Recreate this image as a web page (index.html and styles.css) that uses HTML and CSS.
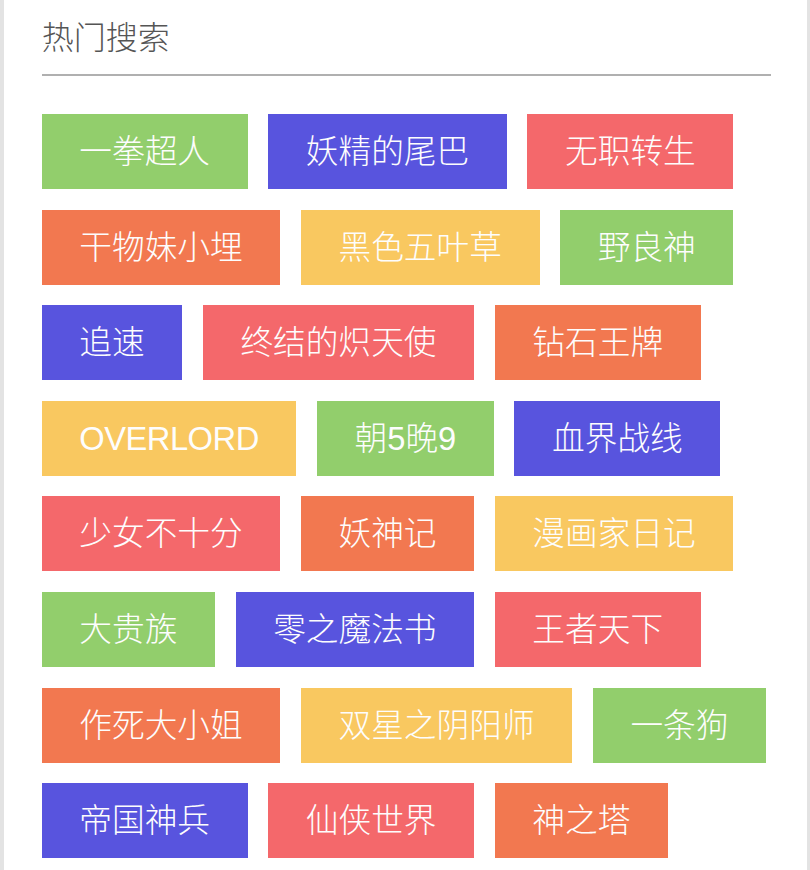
FILE: index.html
```html
<!DOCTYPE html>
<html lang="zh-CN">
<head>
<meta charset="utf-8">
<title>热门搜索</title>
<link rel="stylesheet" href="styles.css">
</head>
<body>
<div class="page">
  <h1 class="title">热门搜索</h1>
  <ul class="tags">
    <li class="tag green">一拳超人</li>
    <li class="tag purple">妖精的尾巴</li>
    <li class="tag red">无职转生</li>
    <li class="tag orange">干物妹小埋</li>
    <li class="tag yellow">黑色五叶草</li>
    <li class="tag green">野良神</li>
    <li class="tag purple">追速</li>
    <li class="tag red">终结的炽天使</li>
    <li class="tag orange">钻石王牌</li>
    <li class="tag yellow latin">OVERLORD</li>
    <li class="tag green">朝5晚9</li>
    <li class="tag purple">血界战线</li>
    <li class="tag red">少女不十分</li>
    <li class="tag orange">妖神记</li>
    <li class="tag yellow">漫画家日记</li>
    <li class="tag green">大贵族</li>
    <li class="tag purple">零之魔法书</li>
    <li class="tag red">王者天下</li>
    <li class="tag orange">作死大小姐</li>
    <li class="tag yellow">双星之阴阳师</li>
    <li class="tag green">一条狗</li>
    <li class="tag purple">帝国神兵</li>
    <li class="tag red">仙侠世界</li>
    <li class="tag orange">神之塔</li>
  </ul>
</div>
</body>
</html>
```
FILE: styles.css
```css
html, body {
  margin: 0;
  padding: 0;
  background: #e3e3e3;
  height: 100%;
}
body {
  font-family: "Liberation Sans", "Noto Sans CJK SC", sans-serif;
}
.page {
  margin: 0 3px 0 4px;
  background: #ffffff;
  min-height: 870px;
  padding: 0 36.3px 0 37.7px;
  box-sizing: border-box;
}
.title {
  margin: 0;
  padding: 18px 0 14.4px;
  font-size: 32px;
  line-height: 41.6px;
  font-weight: 300;
  color: #555555;
  border-bottom: 2px solid #b0b0b0;
}
.tags {
  list-style: none;
  margin: 38px 0 0;
  padding: 0;
  display: flex;
  flex-wrap: wrap;
  gap: 20.6px;
}
.tag {
  height: 75px;
  line-height: 75px;
  padding: 0 37.6px;
  font-size: 32.7px;
  font-weight: 300;
  color: #fdfdfd;
  box-sizing: border-box;
  white-space: nowrap;
}
.latin {
  letter-spacing: -0.5px;
}
.green { background: #92ce6c; }
.purple { background: #5854de; }
.red { background: #f4686b; }
.orange { background: #f27850; }
.yellow { background: #f9c860; }
```
